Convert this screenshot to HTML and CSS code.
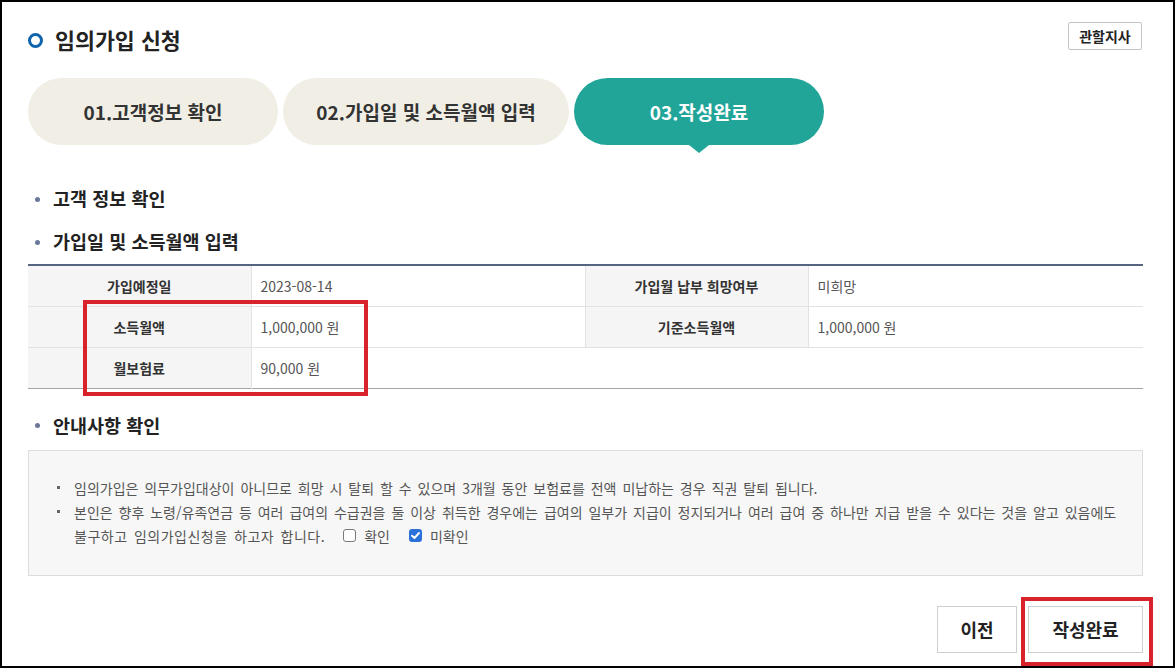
FILE: index.html
```html
<!DOCTYPE html>
<html lang="ko">
<head>
<meta charset="utf-8">
<title>임의가입 신청</title>
<link rel="stylesheet" href="styles.css">
</head>
<body>
<div class="page">
  <div class="header">
    <h1 class="title"><span class="ring"></span>임의가입 신청</h1>
    <button class="branch-btn" type="button">관할지사</button>
  </div>

  <div class="tabs">
    <div class="tab tab-1">01.고객정보 확인</div>
    <div class="tab tab-2">02.가입일 및 소득월액 입력</div>
    <div class="tab tab-3 active">03.작성완료</div>
  </div>

  <h2 class="sec sec-1">고객 정보 확인</h2>
  <h2 class="sec sec-2">가입일 및 소득월액 입력</h2>

  <table class="info-table">
    <colgroup>
      <col class="c-th"><col class="c-td1"><col class="c-th"><col class="c-td2">
    </colgroup>
    <tr>
      <th>가입예정일</th>
      <td>2023-08-14</td>
      <th class="th-r">가입월 납부 희망여부</th>
      <td>미희망</td>
    </tr>
    <tr>
      <th>소득월액</th>
      <td>1,000,000 원</td>
      <th class="th-r">기준소득월액</th>
      <td>1,000,000 원</td>
    </tr>
    <tr>
      <th>월보험료</th>
      <td>90,000 원</td>
      <td class="empty" colspan="2"></td>
    </tr>
  </table>

  <h2 class="sec sec-3">안내사항 확인</h2>

  <div class="notice">
    <ul>
      <li>임의가입은 의무가입대상이 아니므로 희망 시 탈퇴 할 수 있으며 3개월 동안 보험료를 전액 미납하는 경우 직권 탈퇴 됩니다.</li>
      <li>본인은 향후 노령/유족연금 등 여러 급여의 수급권을 둘 이상 취득한 경우에는 급여의 일부가 지급이 정지되거나 여러 급여 중 하나만 지급 받을 수 있다는 것을 알고 있음에도 <span class="tail">불구하고 임의가입신청을 하고자 합니다.</span><label class="chk"><span class="box"></span>확인</label><label class="chk"><span class="box checked"><svg viewBox="0 0 13 13" width="13" height="13"><path d="M3 6.7 L5.5 9 L10 4" fill="none" stroke="#fff" stroke-width="1.9" stroke-linecap="round" stroke-linejoin="round"/></svg></span>미확인</label>
      </li>
    </ul>
  </div>

  <div class="actions">
    <button class="btn btn-prev" type="button">이전</button>
    <button class="btn btn-done" type="button">작성완료</button>
  </div>

  <div class="mark mark-1"></div>
  <div class="mark mark-2"></div>
</div>
</body>
</html>
```

FILE: styles.css
```css
* { box-sizing: border-box; }

html, body {
  margin: 0;
  padding: 0;
  background: #fff;
}

body {
  font-family: "Noto Sans CJK KR", "Noto Sans", sans-serif;
  color: #333;
}

.page {
  position: relative;
  width: 1175px;
  height: 668px;
  border: 2px solid #000;
  padding: 20px 30px 0 26px;
  overflow: hidden;
}

/* header */
.header {
  display: flex;
  justify-content: space-between;
  align-items: flex-start;
}

.title {
  display: flex;
  align-items: center;
  margin: 3px 0 0 0;
  font-size: 21.7px;
  line-height: 30px;
  font-weight: 700;
  color: #222;
}

.ring {
  width: 15px;
  height: 15px;
  border: 3.5px solid #0f64ad;
  border-radius: 50%;
  margin: 1px 12px 0 0;
}

.branch-btn {
  width: 74px;
  height: 28px;
  padding: 0;
  margin: 0 1px 0 0;
  border: 1px solid #c4c4c4;
  border-radius: 2px;
  background: #fff;
  font-family: inherit;
  font-size: 14px;
  font-weight: 700;
  color: #222;
}

/* tabs */
.tabs {
  display: flex;
  gap: 5px;
  margin-top: 23px;
}

.tab {
  position: relative;
  height: 67px;
  border-radius: 34px;
  background: #f1efe5;
  display: flex;
  align-items: center;
  justify-content: center;
  font-size: 19px;
  font-weight: 700;
  color: #333;
}

.tab-1 { width: 250px; }
.tab-2 { width: 286px; }
.tab-3 { width: 250px; }

.tab.active {
  background: #22a599;
  color: #fff;
}

.tab.active::after {
  content: "";
  position: absolute;
  left: 50%;
  bottom: -8px;
  margin-left: -10px;
  border-left: 10px solid transparent;
  border-right: 10px solid transparent;
  border-top: 8px solid #22a599;
}

/* section headings */
.sec {
  display: flex;
  align-items: center;
  margin: 0;
  font-size: 18.5px;
  line-height: 26px;
  font-weight: 700;
  color: #222;
}

.sec::before {
  content: "";
  width: 5px;
  height: 5px;
  border-radius: 50%;
  background: #6b7899;
  margin: 2px 13px 0 7px;
}

.sec-1 { margin-top: 40px; }
.sec-2 { margin-top: 17px; }
.sec-3 { margin-top: 23px; }

/* table */
.info-table {
  width: 1115px;
  margin-top: 10px;
  border-collapse: collapse;
  border-top: 2px solid #56657f;
  border-bottom: 1px solid #a5a5a5;
  table-layout: fixed;
  font-size: 14px;
}

.c-th { width: 223px; }
.c-td1 { width: 334px; }
.c-td2 { width: 335px; }

.info-table tr { height: 41px; }

.info-table tr + tr th,
.info-table tr + tr td {
  border-top: 1px solid #e2e2e2;
}

.info-table th {
  background: #f5f5f5;
  font-weight: 700;
  color: #333;
  text-align: center;
  padding: 0;
  border-right: 1px solid #e2e2e2;
}

.info-table th.th-r {
  border-left: 1px solid #e2e2e2;
}

.info-table td {
  padding: 0 0 0 9px;
  color: #555;
  text-align: left;
}

.info-table td.empty {
  background: #fff;
}

/* notice */
.notice {
  margin-top: 12px;
  width: 1115px;
  background: #f7f7f7;
  border: 1px solid #dcdcdc;
  padding: 25px 10px 27px 27px;
}

.notice ul {
  list-style: none;
  margin: 0;
  padding: 0;
}

.notice li {
  position: relative;
  padding-left: 18px;
  font-size: 14px;
  line-height: 24px;
  color: #555;
  word-spacing: 2px;
}

.notice li::before {
  content: "";
  position: absolute;
  left: 1px;
  top: 10px;
  width: 3px;
  height: 3px;
  background: #666;
}

.tail {
  letter-spacing: 0.5px;
}

.chk {
  display: inline-flex;
  align-items: center;
  margin-left: 18px;
  word-spacing: 0;
  vertical-align: top;
}

.chk + .chk { margin-left: 19px; }

.box {
  display: inline-flex;
  width: 13px;
  height: 13px;
  border: 1px solid #7a7a7a;
  border-radius: 3px;
  background: #fff;
  margin-right: 8px;
}

.box.checked {
  border: none;
  background: #2a72d9;
  align-items: center;
  justify-content: center;
}

.box svg { display: block; }

/* actions */
.actions {
  display: flex;
  justify-content: flex-end;
  gap: 11px;
  margin-top: 30px;
}

.btn {
  height: 47px;
  padding: 0;
  border: 1px solid #cfcfcf;
  background: #fff;
  font-family: inherit;
  font-size: 18px;
  font-weight: 700;
  color: #222;
}

.btn-prev { width: 80px; }
.btn-done { width: 115px; }

/* red annotation boxes */
.mark {
  position: absolute;
  border: 4px solid #d9232c;
}

.mark-1 {
  left: 81px;
  top: 298px;
  width: 285px;
  height: 96px;
}

.mark-2 {
  left: 1019px;
  top: 595px;
  width: 132px;
  height: 69px;
}
```
